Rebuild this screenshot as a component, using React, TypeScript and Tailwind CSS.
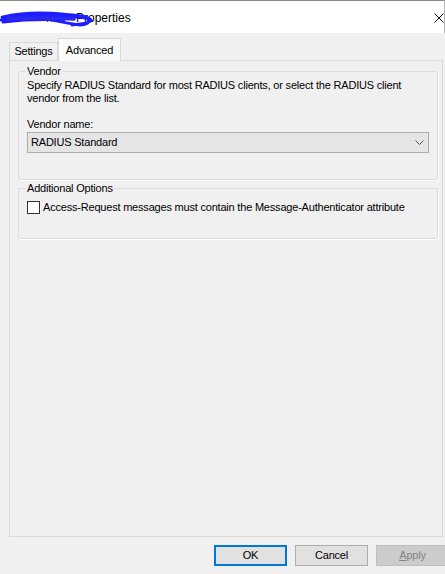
import React from "react";

const font = { fontFamily: '"Liberation Sans", Arial, sans-serif' };

function Scribble() {
  return (
    <svg width="96" height="24" viewBox="0 0 96 24" className="absolute left-0 top-[5px]">
      <path
        d="M2 11 C 20 7, 40 6, 62 8 S 86 10, 90 13 M1 14 C 25 11, 50 9, 76 11 S 91 17, 72 19 M3 16 C 20 14, 40 13, 64 14 M30 10 C 45 12, 62 17, 80 19 C 86 19, 91 16, 88 14 M6 12 L 60 10 M40 8 C 55 7, 70 9, 84 12 M2 13 C 15 10, 35 9, 50 11"
        stroke="#1d1dff"
        strokeWidth="2.8"
        fill="none"
        strokeLinecap="round"
      />
      <path d="M8 13 C 30 11, 52 12, 74 13" stroke="#2a2aee" strokeWidth="3.6" fill="none" strokeLinecap="round" />
    </svg>
  );
}

export default function App() {
  return (
    <div
      className="w-[445px] h-[574px] bg-[#f0f0f0] flex flex-col text-[11px] tracking-[-0.2px] text-black overflow-hidden"
      style={font}
    >
      {/* Title bar */}
      <div className="h-[33px] bg-white border-t border-[#8a8a8a] border-r border-r-[#b5b5b5] flex items-center relative shrink-0">
        <div className="relative h-full w-[76px] shrink-0">
          <span className="absolute left-[46px] top-[8px] text-[12px] text-[#222]">ns</span>
          <Scribble />
        </div>
        <span className="text-[12px] tracking-normal mt-[1px]">Properties</span>
        <svg width="10" height="10" viewBox="0 0 10 10" className="absolute left-[434px] top-[12px]">
          <path d="M0.5 0.5 L9.5 9.5 M9.5 0.5 L0.5 9.5" stroke="#111" strokeWidth="1" />
        </svg>
      </div>

      {/* Tabs */}
      <div className="flex items-end pl-[9px] pt-[5px] shrink-0 relative z-10">
        <div className="h-[18px] w-[49px] border border-b-0 border-[#d9d9d9] bg-[#f0f0f0] flex items-center justify-center">
          Settings
        </div>
        <div className="h-[23px] w-[63px] -mb-px border border-b-0 border-[#d9d9d9] bg-[#fbfbfb] flex items-start justify-center pt-[3px]">
          Advanced
        </div>
      </div>

      {/* Panel */}
      <div className="ml-[9px] mr-[2px] h-[477px] border border-[#d9d9d9] bg-[#f0f0f0] shrink-0 pl-[8px] pr-[4px] pt-[3px]">
        <fieldset className="border border-[#dcdcdc] rounded-[2px] px-[8px] pb-[26px] shadow-[1px_1px_0_#ffffff]">
          <legend className="px-[1px] -ml-[1px] leading-[14px]">Vendor</legend>
          <div className="leading-[13px] mt-[1px]">
            Specify RADIUS Standard for most RADIUS clients, or select the RADIUS client
            <br />
            vendor from the list.
          </div>
          <div className="mt-[12px] leading-[14px]">Vendor name:</div>
          <div className="mt-[1px] h-[21px] bg-[#e5e5e5] border border-[#adadad] flex items-center justify-between pl-[3px] pr-[4px]">
            <span>RADIUS Standard</span>
            <svg width="9" height="6" viewBox="0 0 9 6">
              <path d="M0.5 0.5 L4.5 4.5 L8.5 0.5" stroke="#555" strokeWidth="1" fill="none" />
            </svg>
          </div>
        </fieldset>

        <fieldset className="mt-[1px] border border-[#dcdcdc] rounded-[2px] px-[8px] pb-[22px] shadow-[1px_1px_0_#ffffff]">
          <legend className="px-[1px] -ml-[1px] leading-[14px]">Additional Options</legend>
          <div className="flex items-center mt-[4px]">
            <div className="w-[13px] h-[13px] bg-white border border-[#333] shrink-0" />
            <span className="ml-[3px]">Access-Request messages must contain the Message-Authenticator attribute</span>
          </div>
        </fieldset>
      </div>

      {/* Buttons */}
      <div className="flex justify-end gap-[8px] pt-[8px] -mr-[4px]">
        <button className="w-[73px] h-[21px] bg-[#e1e1e1] border-2 border-[#0078d7] flex items-center justify-center">
          OK
        </button>
        <button className="w-[73px] h-[21px] bg-[#e1e1e1] border border-[#adadad] flex items-center justify-center">
          Cancel
        </button>
        <button className="w-[73px] h-[21px] bg-[#cccccc] border border-[#bfbfbf] text-[#838383] flex items-center justify-center">
          <span>
            <span className="underline">A</span>pply
          </span>
        </button>
      </div>
    </div>
  );
}
